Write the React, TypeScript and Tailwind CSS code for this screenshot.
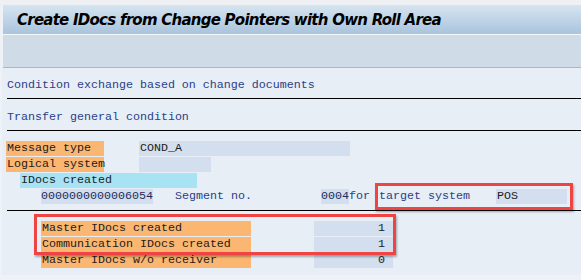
const mono = "font-['Liberation_Mono','Courier_New',monospace] text-[11.67px] leading-[15px] whitespace-nowrap";

function Label({ w, children, tone = "orange" }: { w: string; children: React.ReactNode; tone?: "orange" | "cyan" }) {
  return (
    <div className={`${w} h-[15px] shrink-0 pl-[1px] text-[#1c1c1c] ${tone === "orange" ? "bg-[#fbb671]" : "bg-[#a8e3f3]"}`}>{children}</div>
  );
}

function Field({ w, children, right }: { w: string; children?: React.ReactNode; right?: boolean }) {
  return (
    <div className={`${w} h-[15px] shrink-0 bg-[#d3deee] text-[#1c1c1c] ${right ? "pr-[8px] text-right" : "pl-[1px]"}`}>{children}</div>
  );
}

export default function App() {
  return (
    <div className="relative flex h-[280px] w-[581px] flex-col overflow-hidden bg-[#eef1f6]">
      <div className="h-[5px] bg-[#eef0f4]" />
      <div className="ml-[3px] flex h-[30px] items-center border-b border-[#f4f8fc] bg-gradient-to-b from-[#d6e4f0] to-[#a9c4dd] pl-[14px] pt-[2px]">
        <span className="font-['DejaVu_Sans',sans-serif] text-[15px] font-bold italic tracking-[-0.75px] text-black">
          Create IDocs from Change Pointers with Own Roll Area
        </span>
      </div>
      <div className="ml-[3px] h-[33px] border-b border-[#a7b8ca] bg-[#cfdce7]" />

      <div className={`relative ml-[2px] flex-1 bg-[#e8eef6] ${mono}`}>
        <div className="ml-[5px] h-[31px] border-b border-black pt-[10px] text-[#2a4088]">
          Condition exchange based on change documents
        </div>
        <div className="ml-[5px] h-[32px] border-b border-black pt-[11px] text-[#2a4088]">Transfer general condition</div>

        <div className="mt-[10px] flex flex-col gap-[1px] pl-[4px]">
          <div className="flex">
            <Label w="w-[98px]">Message type</Label>
            <div className="w-[35px] shrink-0" />
            <Field w="w-[211px]">COND_A</Field>
          </div>
          <div className="flex">
            <Label w="w-[98px]">Logical system</Label>
            <div className="w-[35px] shrink-0" />
            <Field w="w-[72px]" />
          </div>
          <div className="flex pl-[14px]">
            <Label w="w-[177px]" tone="cyan">
              IDocs created
            </Label>
          </div>
          <div className="flex pl-[35px]">
            <Field w="w-[112px]">
              <span className="-ml-[1px] text-[#1d2d5c]">0000000000006054</span>
            </Field>
            <div className="w-[22px] shrink-0" />
            <div className="w-[146px] shrink-0 text-[#2a4088]">Segment no.</div>
            <Field w="w-[28px]">
              <span className="-ml-[1px] text-[#1d2d5c]">0004</span>
            </Field>
            <div className="w-[30px] shrink-0 text-[#2a4088]">for</div>
            <div className="w-[117px] shrink-0 text-[#2a4088]">target system</div>
            <Field w="w-[71px]">POS</Field>
          </div>
        </div>

        <div className="ml-[5px] mt-[6px] border-b border-black" />

        <div className="mt-[10px] flex flex-col gap-[1px] pl-[39px]">
          {[
            ["Master IDocs created", "1"],
            ["Communication IDocs created", "1"],
            ["Master IDocs w/o receiver", "0"],
          ].map(([label, value]) => (
            <div key={label} className="flex">
              <Label w="w-[210px]">{label}</Label>
              <div className="w-[63px] shrink-0" />
              <Field w="w-[79px]" right>
                {value}
              </Field>
            </div>
          ))}
        </div>

        <div className="pointer-events-none absolute left-[373px] top-[115px] h-[27px] w-[198px] border-[3px] border-[#ef4444] shadow-[1px_2px_2px_rgba(0,0,0,0.3)]" />
        <div className="pointer-events-none absolute left-[32px] top-[146px] h-[41px] w-[362px] border-[3px] border-[#ef4444] shadow-[1px_2px_2px_rgba(0,0,0,0.3)]" />
        <div className="absolute inset-x-0 bottom-0 h-[5px] bg-[#eef1f6]" />
      </div>
    </div>
  );
}
